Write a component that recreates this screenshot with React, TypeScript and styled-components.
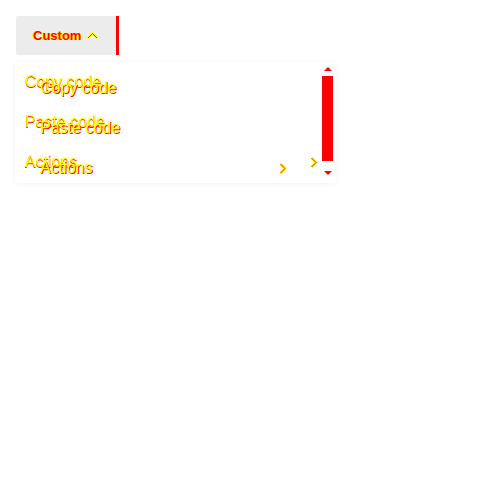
import * as React from 'react';
import styled, { createGlobalStyle } from 'styled-components';

const RED = '#ff0000';
const YELLOW = '#ffff00';

const GlobalStyle = createGlobalStyle`
	html, body {
		margin: 0;
		background: #ffffff;
		font-family: 'Liberation Sans', Arial, sans-serif;
	}
`;

const Page = styled.div`
	display: flex;
	flex-direction: column;
	align-items: flex-start;
	padding: 16px 15px;
	gap: 7px;
`;

const Trigger = styled.button`
	display: flex;
	align-items: center;
	gap: 6px;
	width: 103px;
	height: 39px;
	margin-left: 1px;
	padding: 0 0 0 17px;
	border: none;
	border-right: 3px solid ${RED};
	border-radius: 2px 0 0 2px;
	background: #ececec;
	font-family: 'Liberation Sans', Arial, sans-serif;
	font-size: 13px;
	font-weight: bold;
	color: ${RED};
	text-shadow: 1px 0 0 ${YELLOW}, -1px 0 0 ${YELLOW};
	cursor: pointer;
`;

const Menu = styled.div`
	display: flex;
	width: 321px;
	height: 121px;
	background: #ffffff;
	box-shadow: 0 1px 6px rgba(0, 0, 0, 0.05);
	border-radius: 2px;
`;

const Items = styled.ul`
	flex: 1;
	margin: 0;
	padding: 0;
	list-style: none;
`;

const Item = styled.li`
	position: relative;
	display: flex;
	align-items: center;
	height: 40px;
	padding: 0 4px 0 10px;
`;

const Label = styled.span<{ $ghost?: boolean }>`
	flex: 1;
	font-size: 16px;
	color: ${YELLOW};
	text-shadow: ${(p) => (p.$ghost ? `1px 1px 0 ${RED}` : `0 1px 0 ${RED}`)};
`;

const Ghost = styled.div`
	position: absolute;
	left: 25px;
	top: 6px;
	width: 247px;
	height: 40px;
	display: flex;
	align-items: center;
	pointer-events: none;
`;

const Rail = styled.div`
	display: flex;
	flex-direction: column;
	align-items: center;
	width: 11px;
	padding: 5px 3px 3px 0;
`;

const Arrow = styled.div<{ $down?: boolean }>`
	width: 0;
	height: 0;
	border-left: 4px solid transparent;
	border-right: 4px solid transparent;
	${(p) => (p.$down ? `border-top: 4px solid ${RED};` : `border-bottom: 4px solid ${RED};`)}
	margin: ${(p) => (p.$down ? '10px 0 0' : '0 0 5px')};
`;

const Thumb = styled.div`
	width: 11px;
	height: 85px;
	background: ${RED};
`;

const ChevronRight: React.FC = () => (
	<svg width="8" height="11" viewBox="0 0 8 11">
		<path d="M1.5 1 L6 5.5 L1.5 10" fill="none" stroke={YELLOW} strokeWidth="2.6" />
		<path d="M1.5 1 L6 5.5 L1.5 10" fill="none" stroke={RED} strokeWidth="0.9" />
	</svg>
);

const ChevronUp: React.FC = () => (
	<svg width="11" height="7" viewBox="0 0 11 7">
		<path d="M1 6 L5.5 1.5 L10 6" fill="#ffffff" stroke={YELLOW} strokeWidth="2.2" />
		<path d="M1 6 L5.5 1.5 L10 6" fill="none" stroke={RED} strokeWidth="0.9" />
	</svg>
);

const items = [
	{ label: 'Copy code', sub: false },
	{ label: 'Paste code', sub: false },
	{ label: 'Actions', sub: true },
];

export default function App() {
	return (
		<>
			<GlobalStyle />
			<Page>
				<Trigger>
					Custom
					<ChevronUp />
				</Trigger>
				<Menu>
					<Items>
						{items.map((item) => (
							<Item key={item.label}>
								<Label>{item.label}</Label>
								{item.sub && <ChevronRight />}
								<Ghost>
									<Label $ghost>{item.label}</Label>
									{item.sub && <ChevronRight />}
								</Ghost>
							</Item>
						))}
					</Items>
					<Rail>
						<Arrow />
						<Thumb />
						<Arrow $down />
					</Rail>
				</Menu>
			</Page>
		</>
	);
}
